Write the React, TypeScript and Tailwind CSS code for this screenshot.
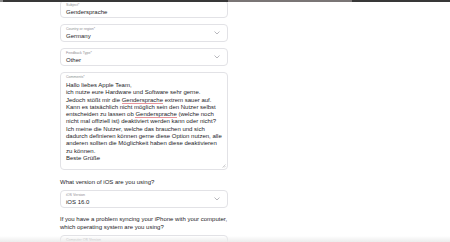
import React from "react";

const Chevron = () => (
  <svg width="6" height="4" viewBox="0 0 6 4" className="shrink-0">
    <polyline points="0.8,0.8 3,3 5.2,0.8" fill="none" stroke="#9a9aa0" strokeWidth="0.7" strokeLinecap="round" strokeLinejoin="round" />
  </svg>
);

function Field({ label, value, select }: { label: string; value?: string; select?: boolean }) {
  return (
    <div className="h-[18px] border border-[#e2e2e6] rounded-[4px] pl-[5px] pr-[7px] flex items-center">
      <div className="flex-1 flex flex-col pt-[1px] self-start">
        <div className="text-[3.6px] leading-[4px] text-[#8e8e93] mt-[1px]">{label}</div>
        {value && <div className="text-[6px] leading-[7px] text-[#1d1d1f] mt-[2px]">{value}</div>}
      </div>
      {select && <Chevron />}
    </div>
  );
}

const Sq = ({ children }: { children: React.ReactNode }) => (
  <span className="border-b border-[#e8959a]">{children}</span>
);

export default function App() {
  const lines: React.ReactNode[] = [
    "Hallo liebes Apple Team,",
    "ich nutze eure Hardware und Software sehr gerne.",
    <>Jedoch stößt mir die <Sq>Gendersprache</Sq> extrem sauer auf.</>,
    "Kann es tatsächlich nicht möglich sein den Nutzer selbst",
    <>entscheiden zu lassen ob <Sq>Gendersprache</Sq> (welche noch</>,
    "nicht mal offiziell ist) deaktiviert werden kann oder nicht?",
    "Ich meine die Nutzer, welche das brauchen und sich",
    "dadurch definieren können gerne diese Option nutzen, alle",
    "anderen sollten die Möglichkeit haben diese deaktivieren",
    "zu können.",
    "Beste Grüße",
  ];
  return (
    <div className="relative w-[450px] h-[242px] overflow-hidden bg-white font-['Liberation_Sans',Arial,sans-serif]">
      <div className="ml-[60px] w-[168px] flex flex-col">
        <div className="flex flex-col gap-[6px]">
          <Field label="Subject*" value="Gendersprache" />
          <Field label="Country or region*" value="Germany" select />
          <Field label="Feedback Type*" value="Other" select />
          <div className="relative h-[98px] border border-[#e2e2e6] rounded-[4px] pl-[5px] pr-[6px] pt-[2px]">
            <div className="text-[3.6px] leading-[4px] text-[#8e8e93]">Comments*</div>
            <div className="mt-[3px] text-[6px] leading-[7.3px] text-[#1d1d1f] whitespace-nowrap">
              {lines.map((l, i) => (
                <div key={i}>{l}</div>
              ))}
            </div>
            <svg width="4" height="4" viewBox="0 0 4 4" className="absolute right-[1.5px] bottom-[1.5px]">
              <line x1="0.5" y1="3.5" x2="3.5" y2="0.5" stroke="#a0a0a5" strokeWidth="0.5" />
              <line x1="2" y1="3.5" x2="3.5" y2="2" stroke="#a0a0a5" strokeWidth="0.5" />
            </svg>
          </div>
        </div>
        <div className="mt-[8px] text-[6px] leading-[8px] text-[#1d1d1f]">What version of iOS are you using?</div>
        <div className="mt-[4px]">
          <Field label="iOS Version" value="iOS 16.0" select />
        </div>
        <div className="mt-[7px] text-[6px] leading-[8px] text-[#1d1d1f] whitespace-nowrap">
          <div>If you have a problem syncing your iPhone with your computer,</div>
          <div>which operating system are you using?</div>
        </div>
        <div className="mt-[4px]">
          <Field label="Computer OS Version" select />
        </div>
      </div>
      <div className="absolute top-0 left-0 right-0 h-[2px] flex">
        <div className="w-[3px] bg-[#8a8a8a]" />
        <div className="w-[225px] bg-[#383838]" />
        <div className="w-[124px] bg-[#7a7575]" />
        <div className="flex-1 bg-[#383838]" />
      </div>
      <div className="absolute bottom-0 left-0 right-0 h-[6px] bg-gradient-to-t from-[#ececec] to-transparent" />
    </div>
  );
}
